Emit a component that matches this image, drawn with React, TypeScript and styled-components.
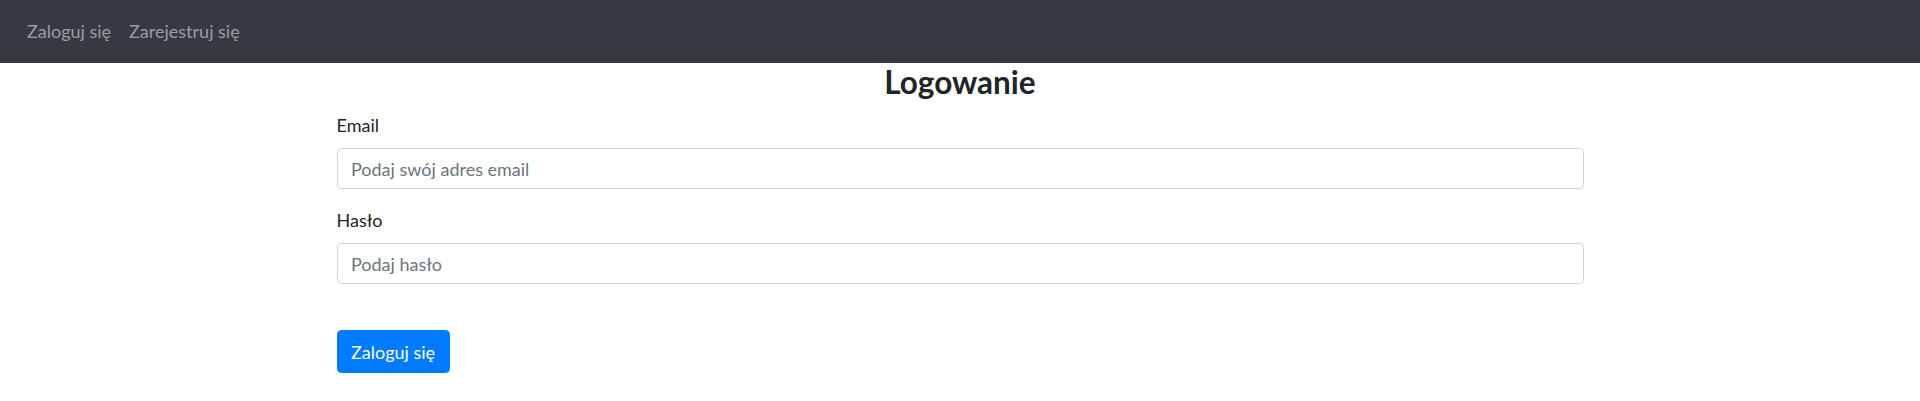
import styled, { createGlobalStyle } from "styled-components";

const GlobalStyle = createGlobalStyle`
  html, body {
    margin: 0;
    padding: 0;
    background: #fff;
  }
  body {
    font-family: "Segoe UI", Lato, "Noto Sans", "Liberation Sans", sans-serif;
    color: #212529;
    font-size: 18px;
    line-height: 1.5;
  }
  * { box-sizing: border-box; }
`;

const Navbar = styled.nav`
  display: flex;
  align-items: center;
  height: 63px;
  padding: 0 18px;
  background: #343a40;
`;

const NavList = styled.div`
  display: flex;
`;

const NavLink = styled.a`
  padding: 9px;
  font-size: 18px;
  line-height: 27px;
  color: rgba(255, 255, 255, 0.5);
  text-decoration: none;
  cursor: pointer;
`;

const Container = styled.main`
  width: 1247px;
  margin: 0 auto;
`;

const Title = styled.h3`
  margin: 0 0 11px;
  font-size: 31.5px;
  line-height: 38px;
  font-weight: 700;
  text-align: center;
`;

const FormGroup = styled.div`
  margin-bottom: 18px;
`;

const Label = styled.label`
  display: block;
  margin-bottom: 9px;
  font-size: 18px;
  line-height: 27px;
`;

const Input = styled.input`
  display: block;
  width: 100%;
  height: 41px;
  padding: 0 13.5px;
  font-family: inherit;
  font-size: 18px;
  color: #495057;
  background: #fff;
  border: 1px solid #ced4da;
  border-radius: 4.5px;
  outline: none;

  &::placeholder {
    color: #6c757d;
  }
`;

const Button = styled.button`
  margin-top: 28px;
  height: 43px;
  padding: 0 13.5px;
  font-family: inherit;
  font-size: 18px;
  color: #fff;
  background: #007bff;
  border: 1px solid #007bff;
  border-radius: 4.5px;
  cursor: pointer;
`;

export default function App() {
  return (
    <>
      <GlobalStyle />
      <Navbar>
        <NavList>
          <NavLink>Zaloguj się</NavLink>
          <NavLink>Zarejestruj się</NavLink>
        </NavList>
      </Navbar>
      <Container>
        <Title>Logowanie</Title>
        <form onSubmit={e => e.preventDefault()}>
          <FormGroup>
            <Label htmlFor="email">Email</Label>
            <Input id="email" type="email" placeholder="Podaj swój adres email" />
          </FormGroup>
          <FormGroup>
            <Label htmlFor="password">Hasło</Label>
            <Input id="password" type="password" placeholder="Podaj hasło" />
          </FormGroup>
          <Button type="submit">Zaloguj się</Button>
        </form>
      </Container>
    </>
  );
}
